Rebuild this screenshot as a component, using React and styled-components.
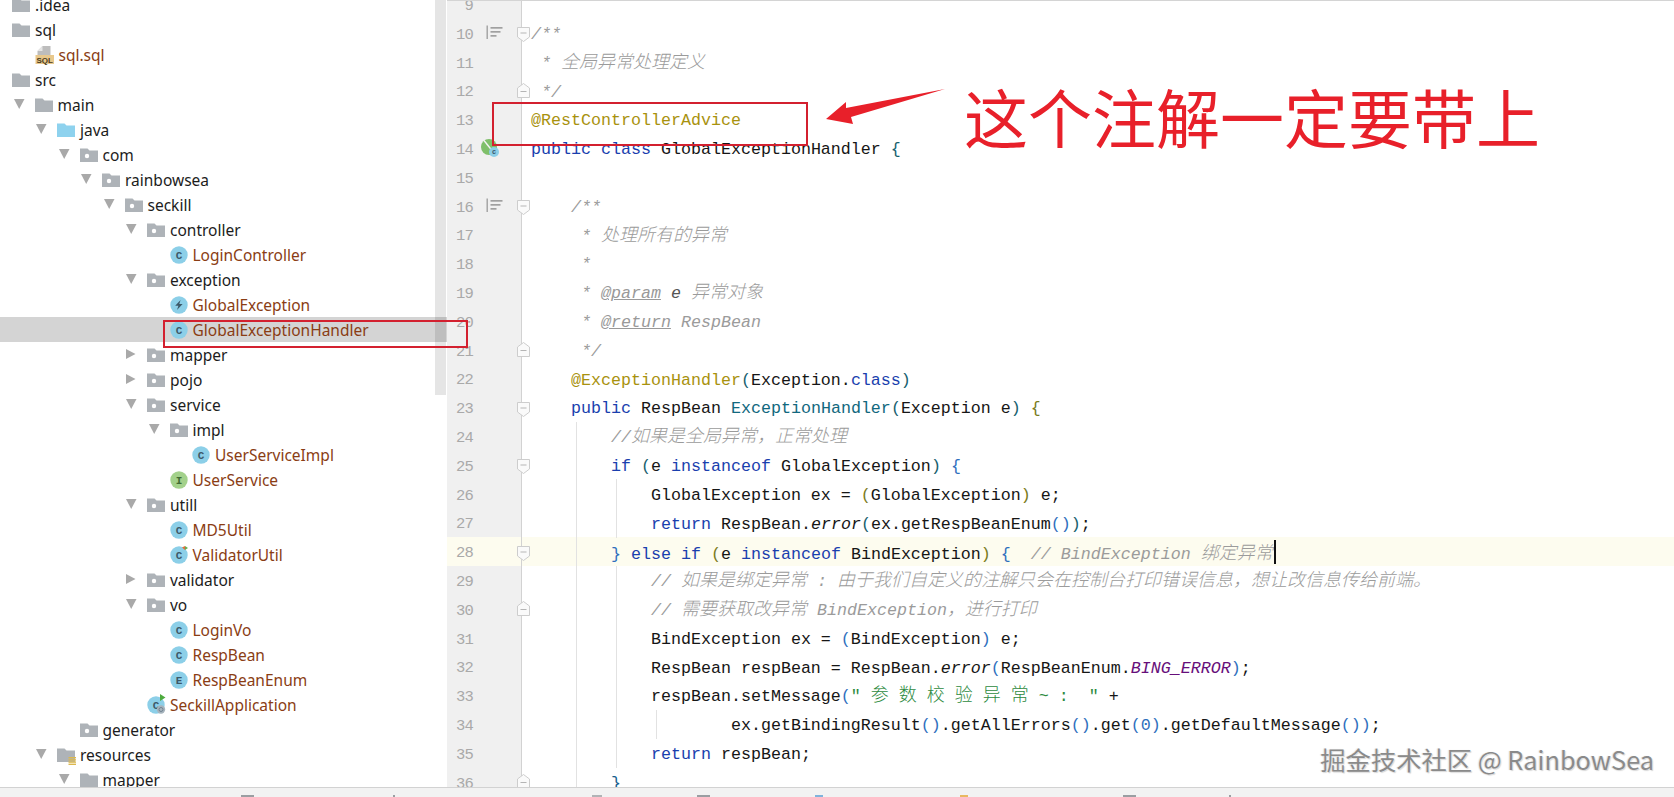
import React from "react";
import styled, { createGlobalStyle } from "styled-components";

const GlobalStyle = createGlobalStyle`
  html, body {
    margin: 0;
    padding: 0;
    background: #fff;
    overflow: hidden;
  }
`;

const Page = styled.div`
  position: relative;
  width: 1674px;
  height: 797px;
  display: flex;
  flex-direction: column;
  overflow: hidden;
  background: #fff;
`;

const Workspace = styled.div`
  flex: 1;
  min-height: 0;
  display: flex;
`;

/* project tree */
const Sidebar = styled.div`
  position: relative;
  width: 447px;
  flex-shrink: 0;
  overflow: hidden;
`;

const TreeList = styled.div`
  margin-top: -8px;
`;

const TreeRow = styled.div`
  height: 25px;
  display: flex;
  align-items: center;
  padding-left: ${(p) => 12 + p.$level * 22.5}px;
  background: ${(p) => (p.$selected ? "#d4d4d4" : "transparent")};
`;

const Caret = styled.svg`
  width: 22px;
  height: 10px;
  margin-left: -22px;
  flex-shrink: 0;
  margin-top: -2px;
`;

const NodeIcon = styled.svg`
  width: 18px;
  height: 18px;
  flex-shrink: 0;
  overflow: visible;
`;

const NodeName = styled.span`
  margin-left: 5px;
  font-family: "Noto Sans", "Liberation Sans", sans-serif;
  font-size: 15.5px;
  white-space: pre;
  color: ${(p) => (p.$file ? "#8a3d14" : "#1c1c1c")};
`;

const Scrollbar = styled.div`
  position: absolute;
  top: 0;
  right: 1px;
  width: 11px;
  height: 395px;
  background: rgba(0, 0, 0, 0.1);
`;

/* editor */
const Editor = styled.div`
  flex: 1;
  min-width: 0;
  overflow: hidden;
  border-top: 1px solid #d4d4d4;
`;

const EditorLines = styled.div`
  margin-top: -11.4px;
`;

const CodeRow = styled.div`
  height: 28.8px;
  display: flex;
  background: ${(p) => (p.$active ? "#fdfcef" : "transparent")};
`;

const Gutter = styled.div`
  width: 75px;
  flex-shrink: 0;
  box-sizing: border-box;
  display: flex;
  align-items: center;
  background: ${(p) => (p.$active ? "#fdfcef" : "#f0f0f0")};
  border-right: 1px solid #d2d2d2;
`;

const LineNo = styled.span`
  width: 26px;
  flex-shrink: 0;
  margin-top: 4px;
  text-align: right;
  font-family: "Liberation Mono", monospace;
  font-size: 15.5px;
  letter-spacing: -0.8px;
  color: #a9a9a9;
`;

const MarkSlot = styled.span`
  width: 22px;
  margin-left: 8px;
  flex-shrink: 0;
  display: flex;
  justify-content: flex-end;
`;

const FoldSlot = styled.span`
  width: 13px;
  margin-left: 14px;
  margin-top: ${(p) => (p.$end ? 0 : 4)}px;
  flex-shrink: 0;
  display: flex;
  position: relative;
  z-index: 1;
`;

const Code = styled.div`
  position: relative;
  flex: 1;
  box-sizing: border-box;
  padding: 3.7px 0 0 9px;
  font-family: "Liberation Mono", monospace;
  font-size: 16.66px;
  line-height: 26px;
  white-space: pre;
  color: #161616;
`;

const IndentGuide = styled.i`
  position: absolute;
  top: 0;
  bottom: -1px;
  left: ${(p) => 14 + p.$col * 10}px;
  width: 1px;
  background: #e2e2e2;
`;

const Keyword = styled.span`
  color: #1a3fae;
`;
const Annotation = styled.span`
  color: #a8920e;
`;
const Paren = styled.span`
  color: ${(p) => p.$color || "#2f6fbd"};
`;
const Method = styled.span`
  color: #11687e;
`;
const Comment = styled.span`
  color: #9b9b9b;
  font-style: italic;
`;
const DocTag = styled.span`
  color: #999;
  font-style: italic;
  text-decoration: underline;
`;
const DocParam = styled.span`
  color: #555;
  font-style: italic;
`;
const Hanzi = styled.span`
  font-family: "Noto Sans CJK SC", sans-serif;
  font-size: 18px;
  font-weight: 300;
  line-height: 0;
`;
const Text = styled.span`
  color: #2d8a3e;
`;
const StaticCall = styled.span`
  font-style: italic;
`;
const Constant = styled.span`
  color: #660e7a;
  font-style: italic;
`;
const TextCaret = styled.span`
  display: inline-block;
  width: 2px;
  height: 24px;
  margin-left: 1px;
  vertical-align: -5px;
  line-height: 0;
  background: #111;
`;

/* bottom tool strip, only the tips of its icons are in the picture */
const StatusBar = styled.div`
  height: 10px;
  flex-shrink: 0;
  box-sizing: border-box;
  display: flex;
  align-items: flex-end;
  background: #f2f2f2;
  border-top: 1px solid #d2d2d2;
`;

const StatusTip = styled.span`
  width: ${(p) => p.$w}px;
  height: 2px;
  margin-left: ${(p) => p.$gap}px;
  background: ${(p) => p.$color};
`;

/* red marks drawn on the screenshot */
const RedBox = styled.div`
  position: absolute;
  left: ${(p) => p.$x}px;
  top: ${(p) => p.$y}px;
  width: ${(p) => p.$w}px;
  height: ${(p) => p.$h}px;
  box-sizing: border-box;
  border: 2px solid #d3202f;
`;

const ArrowMark = styled.svg`
  position: absolute;
  left: 820px;
  top: 84px;
  width: 130px;
  height: 46px;
`;

const Callout = styled.div`
  position: absolute;
  left: 964px;
  top: 69px;
  font-family: "Noto Sans CJK SC", sans-serif;
  font-size: 64px;
  font-weight: 400;
  line-height: 92px;
  white-space: nowrap;
  color: #e8202a;
`;

const Watermark = styled.div`
  position: absolute;
  right: 20px;
  bottom: 23px;
  font-family: "Noto Sans CJK SC", "Liberation Sans", sans-serif;
  font-size: 25.3px;
  line-height: 30px;
  white-space: pre;
  color: #8a8a8a;
  text-shadow: 0 0 2px #fff, 1px 1px 1px #cfcfcf, -1px 0 1px #dcdcdc;
`;

const GRAY = "#aeb3b8";
const CYAN = "#8ccfe8";

function CaretIcon({ open }) {
  return (
    <Caret viewBox="0 0 22 10">
      {open ? <path d="M1 0h10.5L6.2 10z" fill="#a9a9a9" /> : <path d="M1 0l9.5 5L1 10z" fill="#a9a9a9" />}
    </Caret>
  );
}

function FolderIcon({ kind }) {
  const color = kind === "source" ? "#8ed2ee" : GRAY;
  return (
    <NodeIcon viewBox="0 0 18 18">
      <path d="M0 2.5h7.5l2 2H18V16H0z" fill={color} />
      {kind === "package" && <circle cx="7" cy="10" r="2.2" fill="#fff" />}
      {kind === "resources" && (
        <g fill="#dcb84e">
          <rect x="11.5" y="11" width="7.5" height="1.4" />
          <rect x="11.5" y="13.2" width="7.5" height="1.4" />
          <rect x="11.5" y="15.4" width="7.5" height="1.4" />
          <rect x="11.5" y="17.6" width="7.5" height="1.4" />
        </g>
      )}
    </NodeIcon>
  );
}

function SqlIcon() {
  return (
    <NodeIcon viewBox="0 0 18 18" style={{ width: 19 }}>
      <path d="M7 0h8v9H2V5z" fill="#bdbdbd" />
      <path d="M7 0v5H2z" fill="#e6e6e6" />
      <rect x="0" y="9" width="18.5" height="9" fill="#e8c88c" />
      <text x="9.2" y="16.5" textAnchor="middle" fontFamily="Liberation Sans" fontWeight="700" fontSize="8" fill="#4a3a20">
        SQL
      </text>
    </NodeIcon>
  );
}

function ClassIcon({ kind }) {
  const fill = kind === "I" ? "#a3d18b" : CYAN;
  const ink = kind === "I" ? "#3f6b33" : "#3c5868";
  return (
    <NodeIcon viewBox="0 0 18 18">
      <circle cx="9" cy="9" r="8.7" fill={fill} />
      {kind === "X" ? (
        <path d="M10.6 4L5.2 9.8h3.2L7 14l5.6-6H9.3z" fill="#3c5868" />
      ) : (
        <text x="9" y="13" textAnchor="middle" fontFamily="Liberation Mono" fontWeight="700" fontSize="11" fill={ink}>
          {kind === "I" || kind === "E" ? kind : "C"}
        </text>
      )}
      {kind === "U" && (
        <g>
          <path d="M12 1.5l3-1.5v4z" fill="#e0703a" />
          <path d="M15 0l3 2-3 2z" fill="#6aab4f" />
        </g>
      )}
      {kind === "A" && (
        <g>
          <path d="M13 -2l5.5 3.5L13 5z" fill="#4eab3e" />
          <circle cx="14" cy="13.5" r="4.2" fill="#a7b4bd" />
          <circle cx="14" cy="13.5" r="2" fill="none" stroke="#6f8291" strokeWidth="1" />
        </g>
      )}
    </NodeIcon>
  );
}

const tree = [
  { level: 0, name: ".idea", icon: "plain" },
  { level: 0, name: "sql", icon: "plain" },
  { level: 1, name: "sql.sql", icon: "sql", file: true },
  { level: 0, name: "src", icon: "plain" },
  { level: 1, name: "main", icon: "plain", caret: "open" },
  { level: 2, name: "java", icon: "source", caret: "open" },
  { level: 3, name: "com", icon: "package", caret: "open" },
  { level: 4, name: "rainbowsea", icon: "package", caret: "open" },
  { level: 5, name: "seckill", icon: "package", caret: "open" },
  { level: 6, name: "controller", icon: "package", caret: "open" },
  { level: 7, name: "LoginController", icon: "C", file: true },
  { level: 6, name: "exception", icon: "package", caret: "open" },
  { level: 7, name: "GlobalException", icon: "X", file: true },
  { level: 7, name: "GlobalExceptionHandler", icon: "C", file: true, selected: true },
  { level: 6, name: "mapper", icon: "package", caret: "closed" },
  { level: 6, name: "pojo", icon: "package", caret: "closed" },
  { level: 6, name: "service", icon: "package", caret: "open" },
  { level: 7, name: "impl", icon: "package", caret: "open" },
  { level: 8, name: "UserServiceImpl", icon: "C", file: true },
  { level: 7, name: "UserService", icon: "I", file: true },
  { level: 6, name: "utill", icon: "package", caret: "open" },
  { level: 7, name: "MD5Util", icon: "C", file: true },
  { level: 7, name: "ValidatorUtil", icon: "U", file: true },
  { level: 6, name: "validator", icon: "package", caret: "closed" },
  { level: 6, name: "vo", icon: "package", caret: "open" },
  { level: 7, name: "LoginVo", icon: "C", file: true },
  { level: 7, name: "RespBean", icon: "C", file: true },
  { level: 7, name: "RespBeanEnum", icon: "E", file: true },
  { level: 6, name: "SeckillApplication", icon: "A", file: true },
  { level: 3, name: "generator", icon: "package" },
  { level: 2, name: "resources", icon: "resources", caret: "open" },
  { level: 3, name: "mapper", icon: "plain", caret: "open" },
];

function NodeGlyph({ icon }) {
  if (icon === "sql") return <SqlIcon />;
  if (["plain", "source", "package", "resources"].includes(icon)) return <FolderIcon kind={icon} />;
  return <ClassIcon kind={icon} />;
}

function MethodMark() {
  return (
    <svg width="17" height="15" viewBox="0 0 17 15">
      <g fill="#a0a0a0">
        <rect x="0.5" y="0.5" width="1.4" height="13.5" />
        <rect x="4.5" y="2" width="12" height="1.7" />
        <rect x="4.5" y="6" width="10" height="1.7" />
        <rect x="4.5" y="10" width="6" height="1.7" />
      </g>
    </svg>
  );
}

function SpringMark() {
  return (
    <svg width="18" height="18" viewBox="0 0 18 18" style={{ marginRight: 4 }}>
      <circle cx="8" cy="8" r="8" fill="#7fbf6a" />
      <path d="M3 1.5L13 14" stroke="#f4f4f4" strokeWidth="1.4" />
      <circle cx="13" cy="13" r="5" fill="#8ccfe8" />
      <text x="13" y="15.4" textAnchor="middle" fontFamily="Liberation Mono" fontWeight="700" fontSize="7" fill="#3c5868">
        c
      </text>
    </svg>
  );
}

function FoldMark({ end }) {
  return (
    <svg width="13" height="15" viewBox="0 0 13 15">
      <path
        d={end ? "M6.5 0.5L12.5 5V14.5H0.5V5z" : "M0.5 0.5H12.5V10L6.5 14.5L0.5 10z"}
        fill="#fafafa"
        stroke="#cdcdcd"
      />
      <rect x="3.5" y={end ? 8 : 5.5} width="6" height="1" fill="#b5b5b5" />
    </svg>
  );
}

const TEAL = "#17606e";
const OLIVE = "#7a7a20";

const lines = [
  { n: 9 },
  { n: 10, mark: true, fold: "open", code: <Comment>/**</Comment> },
  { n: 11, code: <Comment>{" * "}<Hanzi>全局异常处理定义</Hanzi></Comment> },
  { n: 12, fold: "end", code: <Comment> */</Comment> },
  { n: 13, code: <Annotation>@RestControllerAdvice</Annotation> },
  { n: 14, spring: true, code: <><Keyword>public class</Keyword> GlobalExceptionHandler <Paren $color={TEAL}>{"{"}</Paren></> },
  { n: 15 },
  { n: 16, mark: true, fold: "open", code: <Comment>{"    /**"}</Comment> },
  { n: 17, code: <Comment>{"     * "}<Hanzi>处理所有的异常</Hanzi></Comment> },
  { n: 18, code: <Comment>{"     *"}</Comment> },
  { n: 19, code: <Comment>{"     * "}<DocTag>@param</DocTag> <DocParam>e</DocParam> <Hanzi>异常对象</Hanzi></Comment> },
  { n: 20, code: <Comment>{"     * "}<DocTag>@return</DocTag> RespBean</Comment> },
  { n: 21, fold: "end", code: <Comment>{"     */"}</Comment> },
  { n: 22, code: <>{"    "}<Annotation>@ExceptionHandler</Annotation><Paren $color={TEAL}>(</Paren>Exception.<Keyword>class</Keyword><Paren $color={TEAL}>)</Paren></> },
  { n: 23, fold: "open", code: <>{"    "}<Keyword>public</Keyword> RespBean <Method>ExceptionHandler</Method><Paren $color={TEAL}>(</Paren>Exception e<Paren $color={TEAL}>)</Paren> <Paren $color={OLIVE}>{"{"}</Paren></> },
  { n: 24, guides: [4], code: <Comment>{"        //"}<Hanzi>如果是全局异常，正常处理</Hanzi></Comment> },
  { n: 25, guides: [4], fold: "open", code: <>{"        "}<Keyword>if</Keyword> <Paren $color={TEAL}>(</Paren>e <Keyword>instanceof</Keyword> GlobalException<Paren $color={TEAL}>)</Paren> <Paren>{"{"}</Paren></> },
  { n: 26, guides: [4, 8], code: <>{"            GlobalException ex = "}<Paren $color={OLIVE}>(</Paren>GlobalException<Paren $color={OLIVE}>)</Paren> e;</> },
  { n: 27, guides: [4, 8], code: <>{"            "}<Keyword>return</Keyword> RespBean.<StaticCall>error</StaticCall><Paren $color={TEAL}>(</Paren>ex.getRespBeanEnum<Paren>()</Paren><Paren $color={TEAL}>)</Paren>;</> },
  { n: 28, active: true, guides: [4], fold: "open", code: <>{"        "}<Paren>{"}"}</Paren> <Keyword>else if</Keyword> <Paren $color={OLIVE}>(</Paren>e <Keyword>instanceof</Keyword> BindException<Paren $color={OLIVE}>)</Paren> <Paren>{"{"}</Paren>{"  "}<Comment>// BindException <Hanzi>绑定异常</Hanzi></Comment><TextCaret /></> },
  { n: 29, guides: [4, 8], code: <Comment>{"            // "}<Hanzi>如果是绑定异常</Hanzi> : <Hanzi>由于我们自定义的注解只会在控制台打印错误信息，想让改信息传给前端。</Hanzi></Comment> },
  { n: 30, guides: [4, 8], fold: "end", code: <Comment>{"            // "}<Hanzi>需要获取改异常</Hanzi> BindException<Hanzi>，进行打印</Hanzi></Comment> },
  { n: 31, guides: [4, 8], code: <>{"            BindException ex = "}<Paren>(</Paren>BindException<Paren>)</Paren> e;</> },
  { n: 32, guides: [4, 8], code: <>{"            RespBean respBean = RespBean."}<StaticCall>error</StaticCall><Paren>(</Paren>RespBeanEnum.<Constant>BING_ERROR</Constant><Paren>)</Paren>;</> },
  { n: 33, guides: [4, 8], code: <>{"            respBean.setMessage"}<Paren>(</Paren><Text>" <Hanzi>参</Hanzi> <Hanzi>数</Hanzi> <Hanzi>校</Hanzi> <Hanzi>验</Hanzi> <Hanzi>异</Hanzi> <Hanzi>常</Hanzi> ~ :  "</Text> +</> },
  { n: 34, guides: [4, 8, 12], code: <>{"                    ex.getBindingResult"}<Paren>()</Paren>.getAllErrors<Paren>()</Paren>.get<Paren>(</Paren><Paren>0</Paren><Paren>)</Paren>.getDefaultMessage<Paren>())</Paren>;</> },
  { n: 35, guides: [4, 8], code: <>{"            "}<Keyword>return</Keyword> respBean;</> },
  { n: 36, guides: [4], fold: "end", code: <>{"        "}<Paren $color="#17608e">{"}"}</Paren></> },
];

const statusTips = [
  { gap: 241, w: 13, color: "#9a9ea2" },
  { gap: 139, w: 2, color: "#9a9ea2" },
  { gap: 197, w: 10, color: "#b0b3b6" },
  { gap: 95, w: 13, color: "#9a9ea2" },
  { gap: 105, w: 8, color: "#7fb3dc" },
  { gap: 137, w: 8, color: "#e8b860" },
  { gap: 155, w: 13, color: "#9a9ea2" },
  { gap: 93, w: 2, color: "#9a9ea2" },
];

export default function App() {
  return (
    <Page>
      <GlobalStyle />
      <Workspace>
        <Sidebar>
          <TreeList>
            {tree.map((node, i) => (
              <TreeRow key={i} $level={node.level} $selected={node.selected}>
                {node.caret && <CaretIcon open={node.caret === "open"} />}
                <NodeGlyph icon={node.icon} />
                <NodeName $file={node.file}>{node.name}</NodeName>
              </TreeRow>
            ))}
          </TreeList>
          <Scrollbar />
        </Sidebar>
        <Editor>
          <EditorLines>
            {lines.map((line) => (
              <CodeRow key={line.n} $active={line.active}>
                <Gutter $active={line.active}>
                  <LineNo>{line.n}</LineNo>
                  <MarkSlot>
                    {line.mark && <MethodMark />}
                    {line.spring && <SpringMark />}
                  </MarkSlot>
                  <FoldSlot $end={line.fold === "end"}>{line.fold && <FoldMark end={line.fold === "end"} />}</FoldSlot>
                </Gutter>
                <Code>
                  {(line.guides || []).map((col) => (
                    <IndentGuide key={col} $col={col} />
                  ))}
                  {line.code}
                </Code>
              </CodeRow>
            ))}
          </EditorLines>
        </Editor>
      </Workspace>
      <StatusBar>
        {statusTips.map((tip, i) => (
          <StatusTip key={i} $gap={tip.gap} $w={tip.w} $color={tip.color} />
        ))}
      </StatusBar>

      <RedBox $x={492} $y={102} $w={316} $h={44} />
      <RedBox $x={163} $y={320} $w={305} $h={28} />
      <ArrowMark viewBox="820 84 130 46">
        <path d="M826 119L846 102L846 108L945 89L851 117L853 124z" fill="#e8202a" />
      </ArrowMark>
      <Callout>这个注解一定要带上</Callout>
      <Watermark>掘金技术社区 @ RainbowSea</Watermark>
    </Page>
  );
}
